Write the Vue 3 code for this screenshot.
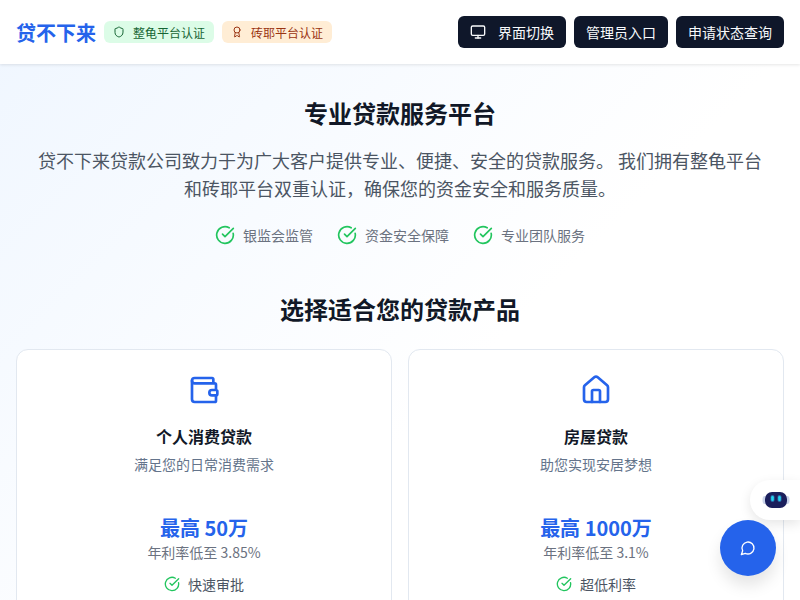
<template>
  <div class="page">
    <header class="topbar">
      <div class="brand">
        <span class="logo">贷不下来</span>
        <span class="badge badge--green">
          <svg width="12" height="12" viewBox="0 0 24 24" fill="none" stroke="currentColor" stroke-width="2" stroke-linecap="round" stroke-linejoin="round"><path d="M20 13c0 5-3.5 7.5-7.66 8.95a1 1 0 0 1-.67-.01C7.5 20.5 4 18 4 13V6a1 1 0 0 1 1-1c2 0 4.5-1.2 6.24-2.72a1.17 1.17 0 0 1 1.52 0C14.51 3.81 17 5 19 5a1 1 0 0 1 1 1z"/></svg>
          整龟平台认证
        </span>
        <span class="badge badge--orange">
          <svg width="12" height="12" viewBox="0 0 24 24" fill="none" stroke="currentColor" stroke-width="2" stroke-linecap="round" stroke-linejoin="round"><path d="m15.477 12.89 1.515 8.526a.5.5 0 0 1-.81.47l-3.58-2.687a1 1 0 0 0-1.197 0l-3.586 2.686a.5.5 0 0 1-.81-.469l1.514-8.526"/><circle cx="12" cy="8" r="6"/></svg>
          砖耶平台认证
        </span>
      </div>
      <div class="actions">
        <button class="btn">
          <svg class="btn-icon" width="16" height="16" viewBox="0 0 24 24" fill="none" stroke="currentColor" stroke-width="2" stroke-linecap="round" stroke-linejoin="round"><rect x="2" y="3" width="20" height="14" rx="2"/><line x1="8" y1="21" x2="16" y2="21"/><line x1="12" y1="17" x2="12" y2="21"/></svg>
          界面切换
        </button>
        <button class="btn">管理员入口</button>
        <button class="btn">申请状态查询</button>
      </div>
    </header>

    <main class="content">
      <section class="hero">
        <h1 class="title">专业贷款服务平台</h1>
        <p class="lead">贷不下来贷款公司致力于为广大客户提供专业、便捷、安全的贷款服务。 我们拥有整龟平台和砖耶平台双重认证，确保您的资金安全和服务质量。</p>
        <div class="perks">
          <span v-for="p in perks" :key="p" class="perk">
            <svg width="20" height="20" viewBox="0 0 24 24" fill="none" stroke="currentColor" stroke-width="2" stroke-linecap="round" stroke-linejoin="round"><path d="M21.801 10A10 10 0 1 1 17 3.335"/><path d="m9 11 3 3L22 4"/></svg>
            {{ p }}
          </span>
        </div>
      </section>

      <h2 class="title products-title">选择适合您的贷款产品</h2>
      <div class="cards">
        <div v-for="c in products" :key="c.name" class="card">
          <svg v-if="c.icon === 'wallet'" class="card-icon" width="32" height="32" viewBox="0 0 24 24" fill="none" stroke="currentColor" stroke-width="2" stroke-linecap="round" stroke-linejoin="round"><path d="M19 7V4a1 1 0 0 0-1-1H5a2 2 0 0 0 0 4h15a1 1 0 0 1 1 1v4h-3a2 2 0 0 0 0 4h3a1 1 0 0 0 1-1v-2a1 1 0 0 0-1-1"/><path d="M3 5v14a2 2 0 0 0 2 2h15a1 1 0 0 0 1-1v-4"/></svg>
          <svg v-else class="card-icon" width="32" height="32" viewBox="0 0 24 24" fill="none" stroke="currentColor" stroke-width="2" stroke-linecap="round" stroke-linejoin="round"><path d="M15 21v-8a1 1 0 0 0-1-1h-4a1 1 0 0 0-1 1v8"/><path d="M3 10a2 2 0 0 1 .709-1.528l7-5.999a2 2 0 0 1 2.582 0l7 5.999A2 2 0 0 1 21 10v9a2 2 0 0 1-2 2H5a2 2 0 0 1-2-2z"/></svg>
          <div class="card-name">{{ c.name }}</div>
          <div class="card-desc">{{ c.desc }}</div>
          <div class="card-amount">{{ c.amount }}</div>
          <div class="card-rate">{{ c.rate }}</div>
          <div class="card-feature">
            <svg width="16" height="16" viewBox="0 0 24 24" fill="none" stroke="currentColor" stroke-width="2" stroke-linecap="round" stroke-linejoin="round"><path d="M21.801 10A10 10 0 1 1 17 3.335"/><path d="m9 11 3 3L22 4"/></svg>
            <span>{{ c.feature }}</span>
          </div>
        </div>
      </div>
    </main>

    <div class="robot">
      <svg class="robot-face" width="28" height="22" viewBox="0 0 28 22">
        <ellipse cx="2.5" cy="11" rx="2" ry="4" fill="#c9d3ea"/>
        <ellipse cx="25.5" cy="11" rx="2" ry="4" fill="#c9d3ea"/>
        <rect x="3" y="3" width="22" height="16" rx="7" fill="#1b1f5c"/>
        <rect x="8.5" y="6" width="4" height="7" rx="2" fill="#38bdf8" opacity="0.5"/>
        <rect x="15.5" y="6" width="4" height="7" rx="2" fill="#38bdf8" opacity="0.5"/>
        <rect x="9.25" y="7" width="2.5" height="5" rx="1.25" fill="#22d3ee"/>
        <rect x="16.25" y="7" width="2.5" height="5" rx="1.25" fill="#22d3ee"/>
      </svg>
    </div>
    <button class="chat-fab">
      <svg width="16" height="16" viewBox="0 0 24 24" fill="none" stroke="currentColor" stroke-width="2" stroke-linecap="round" stroke-linejoin="round"><path d="M7.9 20A9 9 0 1 0 4 16.1L2 22Z"/></svg>
    </button>
  </div>
</template>

<script setup>
const perks = ['银监会监管', '资金安全保障', '专业团队服务']

const products = [
  { name: '个人消费贷款', desc: '满足您的日常消费需求', amount: '最高 50万', rate: '年利率低至 3.85%', feature: '快速审批', icon: 'wallet' },
  { name: '房屋贷款', desc: '助您实现安居梦想', amount: '最高 1000万', rate: '年利率低至 3.1%', feature: '超低利率', icon: 'home' }
]
</script>

<style>
html, body {
  margin: 0;
  overflow: hidden;
}
</style>

<style scoped>
.page {
  height: 600px;
  overflow: hidden;
  font-family: "Noto Sans CJK SC", "Noto Sans", sans-serif;
  background: linear-gradient(135deg, #eff6ff 0%, #ffffff 60%);
  color: #111827;
}
.topbar {
  height: 64px;
  box-sizing: border-box;
  padding: 0 16px;
  display: flex;
  align-items: center;
  justify-content: space-between;
  background: #fff;
  box-shadow: 0 1px 3px #0000001a;
  position: relative;
}
.brand {
  display: flex;
  align-items: center;
  gap: 8px;
}
.logo {
  font-size: 20px;
  font-weight: 700;
  color: #2563eb;
}
.badge {
  display: inline-flex;
  align-items: center;
  gap: 8px;
  height: 22px;
  padding: 0 9px;
  border-radius: 6px;
  font-size: 12px;
}
.badge--green {
  background: #dcfce7;
  color: #166534;
}
.badge--orange {
  background: #ffedd5;
  color: #9a3412;
}
.actions {
  display: flex;
  gap: 8px;
}
.btn {
  height: 32px;
  padding: 0 12px;
  display: inline-flex;
  align-items: center;
  border: none;
  border-radius: 6px;
  background: #0f172a;
  color: #f8fafc;
  font-family: inherit;
  font-size: 14px;
}
.btn-icon {
  margin-right: 12px;
}
.content {
  padding: 31px 16px 0;
}
.hero {
  text-align: center;
  margin-bottom: 46px;
}
.title {
  margin: 0;
  font-size: 24px;
  line-height: 36px;
  font-weight: 700;
  text-align: center;
}
.lead {
  margin: 15px auto 0;
  max-width: 736px;
  font-size: 18px;
  line-height: 28px;
  color: #4b5563;
}
.perks {
  display: flex;
  justify-content: center;
  gap: 24px;
  margin-top: 23px;
}
.perk {
  display: inline-flex;
  align-items: center;
  gap: 8px;
  font-size: 14px;
  line-height: 20px;
  color: #6b7280;
}
.perk svg,
.card-feature svg {
  color: #22c55e;
}
.products-title {
  margin-bottom: 22px;
}
.cards {
  display: grid;
  grid-template-columns: 1fr 1fr;
  gap: 16px;
}
.card {
  height: 300px;
  box-sizing: border-box;
  padding: 24px;
  background: #fff;
  border: 1px solid #e2e8f0;
  border-radius: 12px;
  display: flex;
  flex-direction: column;
  align-items: center;
}
.card-icon {
  color: #2563eb;
}
.card-name {
  margin-top: 18px;
  font-size: 16px;
  line-height: 24px;
  font-weight: 700;
  color: #111827;
}
.card-desc {
  margin-top: 6px;
  font-size: 14px;
  line-height: 20px;
  color: #64748b;
}
.card-amount {
  margin-top: 40px;
  font-size: 20px;
  line-height: 28px;
  font-weight: 700;
  color: #2563eb;
}
.card-rate {
  font-size: 14px;
  line-height: 20px;
  color: #6b7280;
}
.card-feature {
  margin-top: 12px;
  display: flex;
  align-items: center;
  gap: 8px;
  font-size: 14px;
  line-height: 20px;
  color: #4b5563;
}
.robot {
  position: fixed;
  right: 0;
  top: 480px;
  width: 50px;
  height: 40px;
  box-sizing: border-box;
  padding-left: 12px;
  display: flex;
  align-items: center;
  background: #fff;
  border-radius: 20px 0 0 20px;
  box-shadow: 0 4px 12px #0000001a;
}
.robot-face {
  filter: blur(0.5px);
}
.chat-fab {
  position: fixed;
  right: 24px;
  bottom: 24px;
  width: 56px;
  height: 56px;
  border: none;
  border-radius: 50%;
  background: #2563eb;
  color: #fff;
  display: flex;
  align-items: center;
  justify-content: center;
  box-shadow: 0 10px 15px #0000001a;
}
</style>
